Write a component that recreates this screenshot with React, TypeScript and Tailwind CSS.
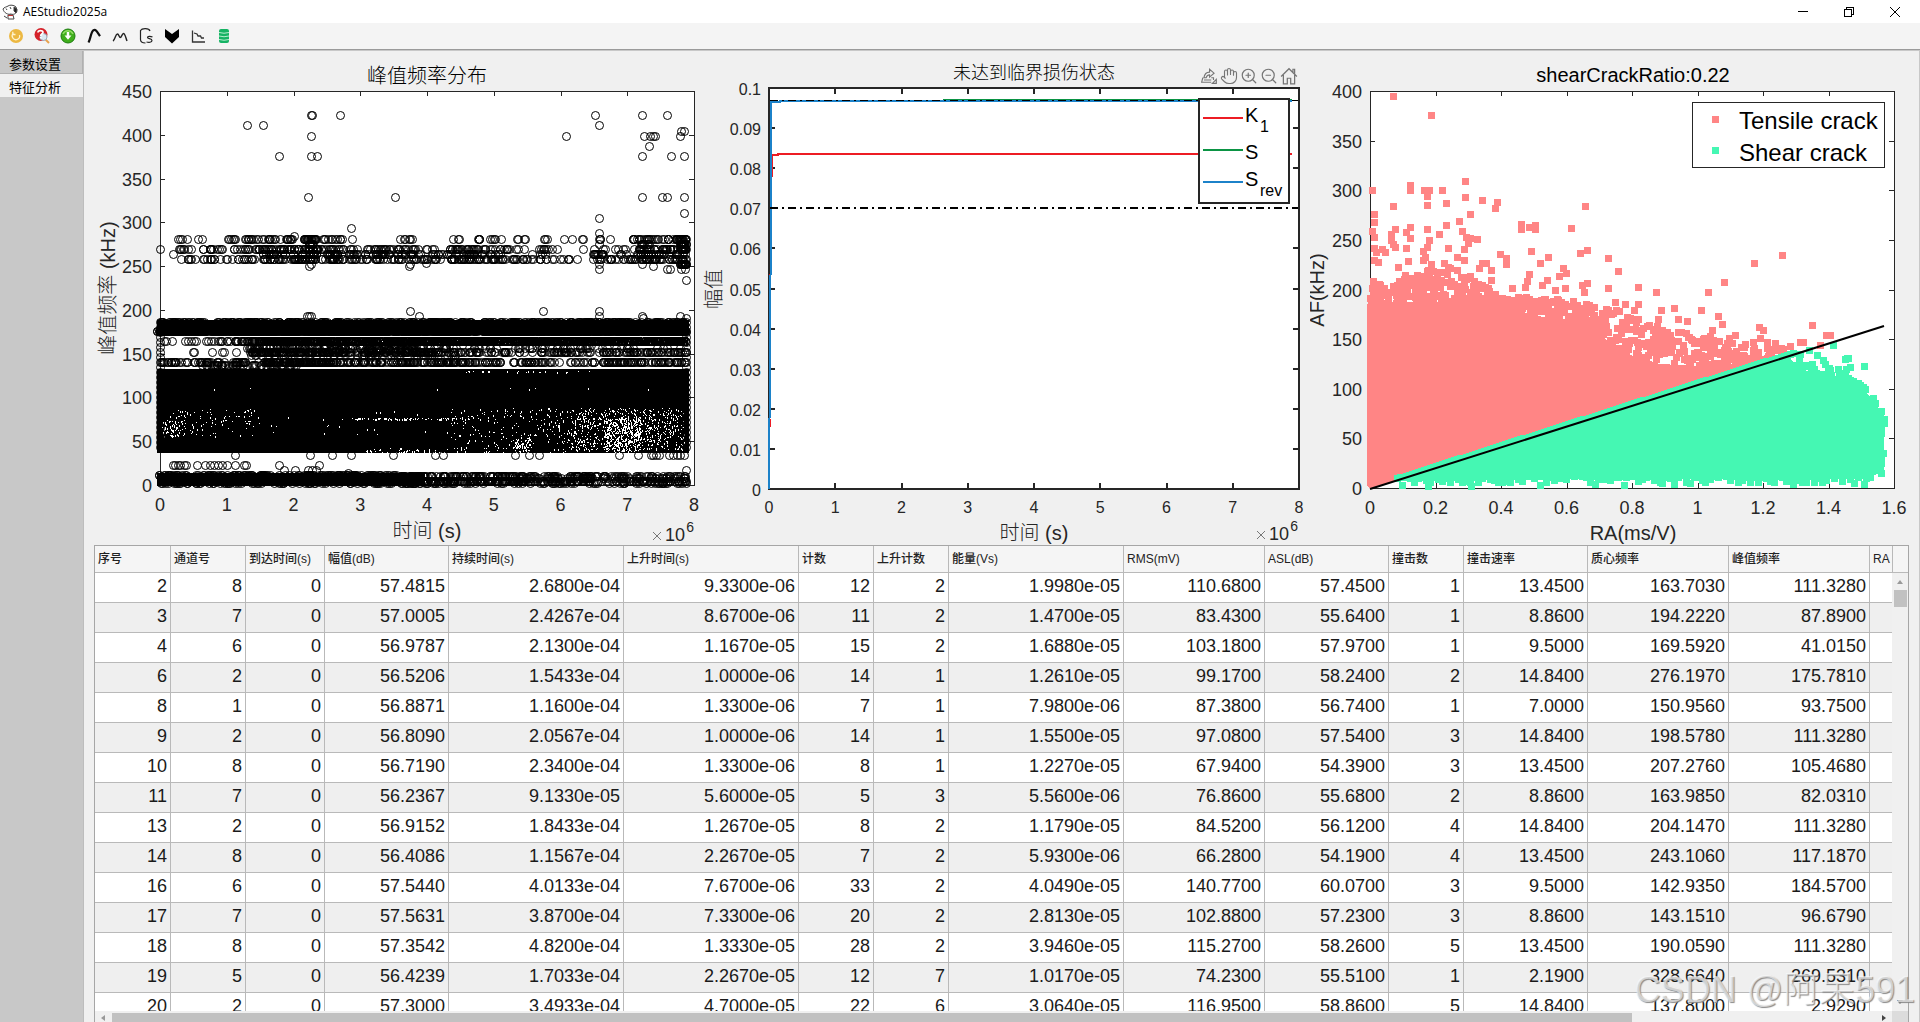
import React from 'react';
import { Hand, ZoomIn, ZoomOut } from 'lucide-react';

type Point = [number, number];

const INK = '#262626';

/* Small deterministic generator so the scatter plots are stable between renders. */
function makeRandom(seed: number) {
  let s = seed;
  return () => {
    s = (s * 1664525 + 1013904223) % 4294967296;
    return s / 4294967296;
  };
}

const ring = (x: number, y: number) => `M${Math.round(x) - 3.5} ${y + 0.5}a4 4 0 1 0 8 0a4 4 0 1 0-8 0`;
const square = (x: number, y: number) => `M${Math.round(x) - 3} ${Math.round(y) - 3}h7v7h-7z`;

function interpolate(points: Point[], x: number) {
  for (let i = 1; i < points.length; i++) {
    if (x <= points[i][0]) {
      const [x0, y0] = points[i - 1];
      const [x1, y1] = points[i];
      return y0 + ((y1 - y0) * (x - x0)) / (x1 - x0);
    }
  }
  return points[points.length - 1][1];
}

/* ---------- peak frequency data ---------- */

const loneFrequencies: Point[] = [
  [247, 125], [263, 125], [311, 115], [312, 115], [340, 115], [311, 136], [279, 156], [311, 156], [317, 156],
  [308, 197], [395, 197], [351, 228], [595, 115], [599, 125], [566, 136], [642, 115], [667, 115], [644, 136],
  [650, 136], [653, 136], [655, 136], [680, 136], [681, 131], [684, 131], [649, 146], [642, 156], [671, 156],
  [684, 156], [642, 197], [662, 197], [667, 197], [684, 197], [684, 213], [599, 218], [599, 233], [686, 280],
  [667, 269], [670, 269], [681, 269], [685, 269], [294, 236], [410, 311], [543, 311], [599, 311], [419, 316],
  [307, 316], [309, 316], [311, 316], [642, 316], [643, 318], [680, 316], [686, 318], [599, 316], [599, 269],
  [599, 264], [599, 244], [409, 266], [410, 264], [426, 263], [309, 266], [311, 264], [160, 249], [173, 254],
  [642, 264], [653, 266], [235, 455], [310, 455], [332, 455], [351, 455], [393, 455], [435, 455], [443, 455],
  [515, 455], [529, 455], [539, 455], [619, 455], [638, 455], [651, 455], [653, 455], [656, 455], [659, 455],
  [669, 455], [673, 455], [677, 455], [680, 455], [684, 455], [173, 465], [175, 465], [178, 465], [180, 465],
  [184, 465], [186, 465], [197, 465], [205, 465], [210, 465], [214, 465], [218, 465], [222, 465], [227, 465],
  [235, 465], [244, 465], [246, 465], [279, 465], [319, 465], [284, 470], [295, 470], [308, 470], [312, 470],
  [316, 470], [348, 473], [686, 470], [164, 341], [166, 341], [172, 341], [185, 341], [188, 341], [191, 341],
  [194, 341], [196, 341], [206, 341], [208, 341], [211, 341], [214, 341], [193, 352], [194, 352], [212, 352],
  [222, 352], [224, 352], [236, 352], [252, 347],
];

/* [row, from, to, count] */
const frequencyRuns: [number, number, number, number][] = [
  [239, 168, 210, 6], [239, 226, 240, 6], [239, 244, 260, 10], [239, 262, 300, 18], [239, 303, 318, 20],
  [239, 320, 352, 12], [239, 395, 412, 6], [239, 453, 459, 3], [239, 475, 506, 9], [239, 516, 530, 4],
  [239, 540, 572, 5], [239, 580, 615, 6], [239, 630, 650, 14], [239, 648, 675, 12], [239, 676, 688, 20],
  [249, 178, 205, 9], [249, 208, 255, 20], [249, 256, 318, 60], [249, 320, 420, 48], [249, 426, 510, 40],
  [249, 515, 560, 12], [249, 580, 625, 8], [249, 632, 688, 36],
  [254, 262, 318, 34], [254, 325, 420, 55], [254, 430, 500, 34], [254, 530, 560, 4], [254, 585, 635, 7], [254, 636, 688, 30],
  [259, 179, 215, 14], [259, 218, 255, 15], [259, 262, 318, 50], [259, 320, 430, 60], [259, 430, 520, 54],
  [259, 520, 582, 20], [259, 588, 632, 18], [259, 632, 688, 46],
  [244, 640, 650, 8], [244, 680, 688, 25], [264, 680, 688, 18], [249, 680, 688, 18], [244, 308, 314, 8], [254, 594, 603, 9],
  [322, 158, 687, 300],
  [341, 217, 255, 26], [341, 250, 687, 500], [331, 157, 687, 900],
  [352, 250, 330, 110], [352, 330, 460, 110], [352, 460, 590, 65], [352, 598, 687, 65],
  [348, 244, 330, 60], [348, 330, 460, 60], [348, 460, 687, 50], [355, 250, 460, 60], [350, 330, 420, 40],
  [362, 160, 220, 40], [362, 222, 265, 18], [362, 265, 330, 130], [362, 330, 480, 150], [362, 480, 595, 60],
  [362, 600, 687, 75], [365, 200, 300, 50],
  [476, 400, 520, 110], [481, 400, 520, 130], [476, 520, 690, 80], [481, 520, 690, 110], [478, 510, 690, 70],
  [483, 160, 690, 140], [475, 157, 400, 120],
];

function buildFrequencyPath() {
  const rnd = makeRandom(17);
  let d = loneFrequencies.map(([x, y]) => ring(x, y)).join('');
  for (const [y, from, to, count] of frequencyRuns) {
    for (let i = 0; i < count; i++) d += ring(from + rnd() * (Math.min(to, 686) - from), y);
  }
  for (let y = 322; y < 450; y += 5) d += ring(160, y) + ring(686, y);
  return d;
}

function buildSpecks() {
  const rnd = makeRandom(5);
  let d = '';
  const scatter = (x0: number, x1: number, y0: number, y1: number, count: number) => {
    for (let i = 0; i < count; i++) {
      const x = Math.round(x0 + rnd() * (x1 - x0));
      const y = Math.round(y0 + rnd() * (y1 - y0));
      d += `M${x} ${y}h1v${rnd() > 0.6 ? 2 : 1}h-1z`;
    }
  };
  scatter(162, 260, 408, 436, 100);
  scatter(162, 185, 420, 436, 60);
  scatter(260, 450, 410, 436, 20);
  scatter(350, 470, 418, 419, 90);
  scatter(450, 570, 408, 452, 230);
  scatter(570, 650, 408, 450, 480);
  scatter(605, 640, 418, 452, 300);
  scatter(650, 684, 408, 450, 180);
  scatter(515, 530, 438, 452, 60);
  scatter(365, 450, 448, 453, 50);
  scatter(460, 590, 371, 372, 26);
  scatter(262, 686, 337, 346, 130);
  scatter(185, 670, 388, 389, 8);
  return d;
}

/* ---------- crack classification data ---------- */

const tensileOutliers: Point[] = [
  [1393, 96], [1431, 115], [1465, 181], [1410, 185], [1410, 190], [1372, 190], [1424, 190], [1429, 190],
  [1442, 190], [1427, 196], [1465, 197], [1482, 200], [1497, 202], [1495, 208], [1446, 203], [1427, 205],
  [1393, 206], [1585, 206], [1374, 214], [1374, 222], [1470, 214], [1459, 221], [1446, 225], [1521, 224],
  [1521, 229], [1529, 227], [1535, 225], [1535, 229], [1571, 228], [1410, 227], [1406, 232], [1410, 238],
  [1395, 229], [1391, 234], [1391, 240], [1393, 244], [1395, 247], [1427, 229], [1439, 234], [1462, 231],
  [1466, 237], [1470, 238], [1477, 239], [1468, 243], [1464, 249], [1448, 248], [1372, 231], [1374, 237],
  [1374, 248], [1376, 252], [1382, 249], [1385, 252], [1406, 248], [1429, 240], [1427, 247], [1423, 251],
  [1425, 257], [1423, 260], [1408, 261], [1378, 262], [1374, 260], [1431, 264], [1444, 263], [1457, 257],
  [1464, 260], [1398, 267], [1500, 254], [1506, 258], [1506, 264], [1531, 251], [1548, 257], [1540, 263],
  [1580, 253], [1587, 250], [1608, 258], [1618, 271], [1563, 268], [1566, 273], [1559, 276], [1547, 280],
  [1529, 274], [1527, 281], [1525, 287], [1542, 285], [1491, 270], [1482, 263], [1486, 263], [1479, 268],
  [1491, 280], [1512, 288], [1555, 290], [1565, 288], [1582, 285], [1587, 283], [1584, 292], [1608, 288],
  [1638, 287], [1656, 292], [1708, 292], [1724, 282], [1754, 263], [1782, 255], [1638, 304], [1625, 304],
  [1615, 302], [1674, 308], [1661, 310], [1701, 310], [1718, 316], [1722, 324], [1687, 321], [1678, 319],
  [1658, 319], [1634, 310], [1636, 322], [1812, 325], [1826, 335], [1830, 335], [1820, 345], [1800, 342],
  [1803, 342], [1790, 346], [1759, 327], [1763, 330], [1753, 342], [1760, 338], [1767, 342], [1775, 343],
  [1712, 330], [1710, 336], [1695, 341], [1683, 345], [1670, 335], [1661, 342], [1729, 338], [1735, 335],
];

const shearOutliers: Point[] = [
  [1833, 345], [1809, 350], [1848, 358], [1845, 359], [1864, 366], [1847, 358], [1823, 360], [1812, 364],
  [1850, 367], [1846, 369], [1829, 368], [1850, 380], [1865, 389], [1799, 358], [1811, 365], [1800, 354],
  [1786, 362], [1790, 368], [1817, 355], [1825, 364], [1838, 369], [1845, 378], [1802, 368], [1881, 411],
  [1884, 419], [1873, 398], [1875, 403], [1402, 485], [1428, 486], [1471, 486], [1540, 485], [1595, 484],
  [1624, 485], [1674, 484], [1705, 482], [1864, 484], [1822, 482], [1660, 482], [1793, 484],
];

const tensileTop: Point[] = [
  [1370, 276], [1385, 286], [1405, 274], [1450, 266], [1470, 274], [1500, 294], [1560, 298], [1610, 308], [1650, 322],
  [1700, 337], [1760, 346], [1800, 350],
];
const tensileSolid: Point[] = [
  [1367, 304], [1400, 308], [1440, 302], [1480, 308], [1510, 318], [1560, 326], [1600, 334], [1620, 352],
  [1660, 364], [1700, 366], [1740, 368], [1786, 357],
];

function buildTensile() {
  const rnd = makeRandom(91);
  let d = tensileOutliers.map(([x, y]) => square(x, y)).join('');
  for (let i = 0; i < 720; i++) {
    const x = 1371 + Math.pow(rnd(), 1.1) * 415;
    const top = interpolate(tensileTop, x);
    const bottom = Math.max(interpolate(tensileSolid, x), top);
    const y = bottom - Math.pow(rnd(), 1.3) * (bottom - top);
    if (y < 489 - (x - 1370) * 0.317 - 4) d += square(x, y);
  }
  for (let y = 298; y < 484; y += 4) d += square(1370 + Math.floor(rnd() * 2), y);
  return d;
}

function buildShear() {
  const rnd = makeRandom(33);
  let d = shearOutliers.map(([x, y]) => square(x, y)).join('');
  for (let x = 1402; x < 1872; x += 4) d += square(x, 475 + rnd() * 8);
  for (let x = 1397; x < 1795; x += 3) d += square(x, 489 - (x - 1370) * 0.317 - 2);
  for (let i = 0; i < 60; i++) {
    const x = 1775 + rnd() * 90;
    d += square(x, interpolate([[1775, 368], [1830, 376], [1866, 392]], x) - rnd() * 8);
  }
  for (let y = 418; y < 475; y += 5) d += square(1879 + rnd() * 5, y);
  return d;
}

/* ---------- chart building blocks ---------- */

interface AxesProps {
  left: number;
  right: number;
  top: number;
  bottom: number;
  xLabels: string[];
  yLabels: string[];
  width: number;
  tick: number;
}

function Axes({ left, right, top, bottom, xLabels, yLabels, width, tick }: AxesProps) {
  const o = width === 1 ? 0.5 : 0;
  let d = `M${left + o} ${top + o}H${right + o}V${bottom + o}H${left + o}Z`;
  xLabels.forEach((_, i) => {
    const x = Math.round(left + ((right - left) * i) / (xLabels.length - 1)) + o;
    d += `M${x} ${top}v${tick}M${x} ${bottom}v${-tick}`;
  });
  yLabels.forEach((_, i) => {
    const y = Math.round(bottom - ((bottom - top) * i) / (yLabels.length - 1)) + o;
    d += `M${left} ${y}h${tick}M${right} ${y}h${-tick}`;
  });
  return <path d={d} fill="none" stroke={INK} strokeWidth={width} shapeRendering="crispEdges" />;
}

function AxisLabels({ left, right, top, bottom, xLabels, yLabels, size, drop }: Omit<AxesProps, 'width' | 'tick'> & { size: number; drop: number }) {
  return (
    <g fill={INK} fontSize={size}>
      {xLabels.map((t, i) => (
        <text key={t} x={left + ((right - left) * i) / (xLabels.length - 1)} y={bottom + drop} textAnchor="middle">
          {t}
        </text>
      ))}
      {yLabels.map((t, i) => (
        <text key={t} x={left - 8} y={bottom - ((bottom - top) * i) / (yLabels.length - 1) + 7} textAnchor="end">
          {t}
        </text>
      ))}
    </g>
  );
}

const SVG_CLASS = "block h-auto w-full font-['Liberation_Sans','Noto_Sans_CJK_SC',sans-serif] font-light";
const MILLIONS = ['0', '1', '2', '3', '4', '5', '6', '7', '8'];

function Exponent({ x, y }: { x: number; y: number }) {
  return (
    <g fill={INK} fontSize="18">
      <path d={`M${x - 41} ${y - 9}l8 8m0-8l-8 8`} stroke="#777" fill="none" />
      <text x={x - 9} y={y} textAnchor="end">10</text>
      <text x={x} y={y - 9} textAnchor="end" fontSize="14">6</text>
    </g>
  );
}

function FrequencyChart() {
  const box = {
    left: 160, right: 694, top: 91, bottom: 485, xLabels: MILLIONS,
    yLabels: ['0', '50', '100', '150', '200', '250', '300', '350', '400', '450'],
  };
  return (
    <svg viewBox="84 51 616 494" className={SVG_CLASS} role="img" aria-label="峰值频率分布">
      <rect x="160" y="91" width="534" height="394" fill="#fff" />
      <Axes {...box} width={1} tick={5} />
      <AxisLabels {...box} size={18} drop={26} />
      <g shapeRendering="crispEdges">
        <path d="M157 320H689V335H157ZM262 337H688V346H262ZM157 369H689V453H157ZM157 473H425V486H157Z" fill="#000" />
        <path d={buildSpecks()} fill="#fff" />
      </g>
      <path d={buildFrequencyPath()} fill="none" stroke="#000" />
      <text x="427" y="83" fontSize="20" textAnchor="middle">峰值频率分布</text>
      <text x="427" y="538" fontSize="20" textAnchor="middle" fill={INK}>时间 (s)</text>
      <text transform="translate(115 288) rotate(-90)" fontSize="20" textAnchor="middle" fill={INK}>峰值频率 (kHz)</text>
      <Exponent x={694} y={541} />
    </svg>
  );
}

function DamageChart() {
  const box = {
    left: 769, right: 1299, top: 88, bottom: 489, xLabels: MILLIONS,
    yLabels: ['0', '0.01', '0.02', '0.03', '0.04', '0.05', '0.06', '0.07', '0.08', '0.09', '0.1'],
  };
  return (
    <svg viewBox="700 51 610 494" className={SVG_CLASS} role="img" aria-label="未达到临界损伤状态">
      <rect x="769" y="88" width="530" height="401" fill="#fff" />
      <Axes {...box} width={2} tick={6} />
      <AxisLabels {...box} size={16} drop={24} />
      <g fill="none" strokeWidth="2" shapeRendering="crispEdges">
        <path d="M770 302v-28M772 177v-22h6v-1H1292M770 427v-8" stroke="#ed1c24" />
        <path d="M943 100H1292" stroke="#0b9444" />
        <path d="M769 489V418M770 418V275M771 275V102h9v-1H1292" stroke="#1c82c9" />
        <path d="M770 208H1298" stroke="#000" strokeDasharray="8 4 2 4" />
        <path d="M770 100.5H1298" stroke="#000" strokeWidth="1" strokeDasharray="8 4 2 4" />
      </g>
      <rect x="1199" y="99" width="90" height="104" fill="#fff" stroke={INK} strokeWidth="2" shapeRendering="crispEdges" />
      <g strokeWidth="2" shapeRendering="crispEdges">
        <path d="M1203 118h40" stroke="#ed1c24" />
        <path d="M1203 150h40" stroke="#0b9444" />
        <path d="M1203 182h40" stroke="#1c82c9" />
      </g>
      <g fontSize="20">
        <text x="1245" y="122">K</text>
        <text x="1260" y="132" fontSize="16">1</text>
        <text x="1245" y="159">S</text>
        <text x="1245" y="186">S</text>
        <text x="1260" y="196" fontSize="16">rev</text>
      </g>
      <text x="1034" y="79" fontSize="18" textAnchor="middle">未达到临界损伤状态</text>
      <text x="1034" y="540" fontSize="20" textAnchor="middle" fill={INK}>时间 (s)</text>
      <text transform="translate(721 289) rotate(-90)" fontSize="20" textAnchor="middle" fill={INK}>幅值</text>
      <Exponent x={1298} y={540} />
    </svg>
  );
}

function CrackChart() {
  const box = {
    left: 1370, right: 1894, top: 91, bottom: 488,
    xLabels: ['0', '0.2', '0.4', '0.6', '0.8', '1', '1.2', '1.4', '1.6'],
    yLabels: ['0', '50', '100', '150', '200', '250', '300', '350', '400'],
  };
  const solid = tensileSolid.map(([x, y]) => `${x} ${y}`).join('L');
  return (
    <svg viewBox="1310 51 609 494" className={SVG_CLASS} role="img" aria-label="shearCrackRatio:0.22">
      <rect x="1370" y="91" width="524" height="397" fill="#fff" />
      <Axes {...box} width={1} tick={5} />
      <AxisLabels {...box} size={18} drop={26} />
      <g shapeRendering="crispEdges">
        <path d={`M${solid}L1370 489L1367 485Z`} fill="#ff8585" />
        <path d={buildTensile()} fill="#ff8585" />
        <path d="M1396 479L1500 445L1787 354L1800 370L1850 378L1866 392L1877 405L1885 425L1884 450L1878 474L1860 479Z" fill="#45f7b3" />
        <path d={buildShear()} fill="#45f7b3" />
      </g>
      <path d="M1370 489L1884 326" stroke="#000" strokeWidth="2" />
      <rect x="1692.5" y="102.5" width="192" height="65" fill="#fff" stroke={INK} />
      <path d="M1712 116h7v7h-7z" fill="#ff8585" />
      <path d="M1712 147h7v7h-7z" fill="#45f7b3" />
      <g fontSize="24">
        <text x="1739" y="129">Tensile crack</text>
        <text x="1739" y="161">Shear crack</text>
      </g>
      <text x="1633" y="82" fontSize="20" textAnchor="middle">shearCrackRatio:0.22</text>
      <text x="1633" y="540" fontSize="20" textAnchor="middle" fill={INK}>RA(ms/V)</text>
      <text transform="translate(1324 290) rotate(-90)" fontSize="20" textAnchor="middle" fill={INK}>AF(kHz)</text>
    </svg>
  );
}

function PlotTools() {
  const icon = 'h-[18px] w-[18px]';
  const button = 'grid h-5 w-5 place-items-center';
  return (
    <div className="absolute right-[11px] top-[15px] flex text-[#757575]">
      <button className={button} aria-label="导出">
        <svg viewBox="0 0 16 16" className={icon} fill="none" stroke="currentColor" strokeWidth="1">
          <path d="M2.500 9.500L1.500 13.500H10M3.500 11.500H10M3.500 9.500C4 6 5.500 4.500 8.500 4.500V2l4 3.500-4 3.500V7C7 7 6 8 5.500 9.500zM10 9.500h2v2M11 14.500h3.500V11z" />
        </svg>
      </button>
      <button className={button} aria-label="平移"><Hand className={icon} strokeWidth={1.5} /></button>
      <button className={button} aria-label="放大"><ZoomIn className={icon} strokeWidth={1.6} /></button>
      <button className={button} aria-label="缩小"><ZoomOut className={icon} strokeWidth={1.6} /></button>
      <button className={button} aria-label="还原视图">
        <svg viewBox="0 0 16 16" className={icon} fill="none" stroke="currentColor" strokeWidth="1.1">
          <path d="M1 8.500L8 1.500l7 7M3 7v8h3.500v-5h3v5H13V7M11.500 4.500V2H13v4" />
        </svg>
      </button>
    </div>
  );
}

/* ---------- toolbar ---------- */

const toolIcons: { label: string; icon: React.ReactNode }[] = [
  {
    label: '刷新',
    icon: (
      <>
        <circle cx="8" cy="8" r="7" fill="#ecb842" />
        <path d="M5.500 5.200A3.700 3.700 0 1 0 11.500 7M4.800 3.800v2.700h2.700" fill="none" stroke="#fff4d0" strokeWidth="1.300" />
      </>
    ),
  },
  {
    label: '查询',
    icon: (
      <>
        <path d="M11 11l4 4" stroke="#e9a24c" strokeWidth="2" />
        <circle cx="7" cy="6.500" r="6.500" fill="#d5222a" />
        <circle cx="9.500" cy="9" r="3.500" fill="#dce8f2" stroke="#98a9b8" />
        <path d="M4 4.500C4 2 9 2 9 4.300 9 6 6.700 6 6.700 8M6.700 9v1.500" fill="none" stroke="#fff" strokeWidth="1.700" />
      </>
    ),
  },
  {
    label: '导入',
    icon: (
      <>
        <circle cx="8" cy="8" r="7" fill="#3fae1c" stroke="#1d7d10" />
        <path d="M3 6a5.500 5.500 0 0 1 10 0" fill="none" stroke="#8fdc61" strokeWidth="1.500" />
        <path d="M8 4v4" stroke="#fff" strokeWidth="2.500" />
        <path d="M4.500 7.500h7L8 11.800z" fill="#fff" />
      </>
    ),
  },
  {
    label: '单峰',
    icon: <path d="M2.500 14.500C4.500 11 5 3.500 7.500 2.200s3.500 1.500 6.500 6" fill="none" stroke="#111" strokeWidth="2.200" />,
  },
  {
    label: '多峰',
    icon: <path d="M1 13c2-1 2.500-7 4.300-7S7 9.500 8.300 9.500 10 5.500 11.500 5.500 13.500 9 15 13" fill="none" stroke="#222" strokeWidth="1.400" />,
  },
  {
    label: 'Gs',
    icon: (
      <path
        d="M12 3C11 0 4 0 2.500 2.500v9c0 3 3 3.500 5 3.500M14.500 9c-2-1-5-1-5 .5s4.500.8 4.500 3-3.500 2-5.500 1.500"
        fill="none"
        stroke="#222"
        strokeWidth="1.200"
      />
    ),
  },
  { label: '临界', icon: <path d="M1 1l7 5 7-5v8l-7 6.500L1 9z" fill="#000" /> },
  {
    label: '趋势',
    icon: <path d="M2.500 2.500v11.500H15M4 5l3 1 1 2h2.500l1 2H14" fill="none" stroke="#333" strokeWidth="1.300" />,
  },
  {
    label: '数据库',
    icon: (
      <>
        <rect x="3" y="1" width="10" height="14" rx="2" fill="#16b364" />
        <path d="M3 4.500q5 1.500 10 0M3 8q5 1.500 10 0M3 11.500q5 1.500 10 0" fill="none" stroke="#b8edcf" />
      </>
    ),
  },
];

function TitleBar() {
  const control = 'grid h-full w-[46px] place-items-center';
  return (
    <header className="flex h-[23px] shrink-0 items-center bg-white pl-[2px] pr-[2px]">
      <svg viewBox="0 0 16 16" className="h-4 w-4" fill="none" stroke="#444" strokeWidth="1">
        <path d="M1 5C2 3 5 3 6 2c2-1.500 6-1 8 1l1 4c-1 3-4 4-6 3C6 11 2 9 1 5z" fill="#fff" />
        <path d="M12 3l3 2-1 4-2-2z" fill="#222" />
        <path d="M6 11h5l1 4H6zM2 12l3 2M4 4.500l1 1.500M8 3l1 2" />
        <path d="M6 11.500h5" stroke="#b33" />
      </svg>
      <h1 className="ml-[5px] flex-1 font-['Open_Sans',sans-serif] text-xs leading-4 text-black">AEStudio2025a</h1>
      <button className={control} aria-label="最小化">
        <svg viewBox="0 0 12 12" className="h-3 w-3" shapeRendering="crispEdges"><path d="M1 5h10v1H1z" /></svg>
      </button>
      <button className={control} aria-label="还原">
        <svg viewBox="0 0 12 12" className="h-3 w-3" fill="none" stroke="#000" shapeRendering="crispEdges">
          <path d="M1.500 3.500h7v7h-7zM3.500 3.500v-2h7v7h-2" />
        </svg>
      </button>
      <button className={control} aria-label="关闭">
        <svg viewBox="0 0 12 12" className="h-3 w-3" stroke="#000"><path d="M1 1l10 10M11 1L1 11" /></svg>
      </button>
    </header>
  );
}

function Toolbar() {
  return (
    <div role="toolbar" className="flex h-[27px] shrink-0 items-center border-b border-[#9a9a9a] bg-[#f4f4f4] pl-[3px]">
      {toolIcons.map(({ label, icon }) => (
        <button key={label} aria-label={label} className="grid h-6 w-[26px] place-items-center">
          <svg viewBox="0 0 16 16" className="h-4 w-4">{icon}</svg>
        </button>
      ))}
    </div>
  );
}

/* ---------- table ---------- */

const columns: [string, string][] = [
  ['序号', 'w-[76px]'], ['通道号', 'w-[75px]'], ['到达时间(s)', 'w-[79px]'], ['幅值(dB)', 'w-[124px]'],
  ['持续时间(s)', 'w-[175px]'], ['上升时间(s)', 'w-[175px]'], ['计数', 'w-[75px]'], ['上升计数', 'w-[75px]'],
  ['能量(Vs)', 'w-[175px]'], ['RMS(mV)', 'w-[141px]'], ['ASL(dB)', 'w-[124px]'], ['撞击数', 'w-[75px]'],
  ['撞击速率', 'w-[124px]'], ['质心频率', 'w-[141px]'], ['峰值频率', 'w-[141px]'], ['RA', 'w-[75px]'],
];

const rows = `2 8 0 57.4815 2.6800e-04 9.3300e-06 12 2 1.9980e-05 110.6800 57.4500 1 13.4500 163.7030 111.3280
3 7 0 57.0005 2.4267e-04 8.6700e-06 11 2 1.4700e-05 83.4300 55.6400 1 8.8600 194.2220 87.8900
4 6 0 56.9787 2.1300e-04 1.1670e-05 15 2 1.6880e-05 103.1800 57.9700 1 9.5000 169.5920 41.0150
6 2 0 56.5206 1.5433e-04 1.0000e-06 14 1 1.2610e-05 99.1700 58.2400 2 14.8400 276.1970 175.7810
8 1 0 56.8871 1.1600e-04 1.3300e-06 7 1 7.9800e-06 87.3800 56.7400 1 7.0000 150.9560 93.7500
9 2 0 56.8090 2.0567e-04 1.0000e-06 14 1 1.5500e-05 97.0800 57.5400 3 14.8400 198.5780 111.3280
10 8 0 56.7190 2.3400e-04 1.3300e-06 8 1 1.2270e-05 67.9400 54.3900 3 13.4500 207.2760 105.4680
11 7 0 56.2367 9.1330e-05 5.6000e-05 5 3 5.5600e-06 76.8600 55.6800 2 8.8600 163.9850 82.0310
13 2 0 56.9152 1.8433e-04 1.2670e-05 8 2 1.1790e-05 84.5200 56.1200 4 14.8400 204.1470 111.3280
14 8 0 56.4086 1.1567e-04 2.2670e-05 7 2 5.9300e-06 66.2800 54.1900 4 13.4500 243.1060 117.1870
16 6 0 57.5440 4.0133e-04 7.6700e-06 33 2 4.0490e-05 140.7700 60.0700 3 9.5000 142.9350 184.5700
17 7 0 57.5631 3.8700e-04 7.3300e-06 20 2 2.8130e-05 102.8800 57.2300 3 8.8600 143.1510 96.6790
18 8 0 57.3542 4.8200e-04 1.3330e-05 28 2 3.9460e-05 115.2700 58.2600 5 13.4500 190.0590 111.3280
19 5 0 56.4239 1.7033e-04 2.2670e-05 12 7 1.0170e-05 74.2300 55.5100 1 2.1900 328.6640 269.5310
20 2 0 57.3000 3.4933e-04 4.7000e-05 22 6 3.0640e-05 116.9500 58.8600 5 14.8400 137.8000 2.9290`
  .split('\n')
  .map((line) => line.split(' '));

function DataTable() {
  return (
    <section className="mx-[10px] flex min-h-0 flex-1 flex-col border-x border-t border-[#a6a6a6] bg-[#f0f0f0]">
      <div className="flex min-h-0 flex-1">
        <div className="min-w-0 flex-1 overflow-hidden">
          <table className="w-[1850px] table-fixed border-separate border-spacing-0">
            <colgroup>
              {columns.map(([name, width]) => <col key={name} className={width} />)}
            </colgroup>
            <thead>
              <tr className="h-[27px] bg-[#f5f5f5]">
                {columns.map(([name]) => (
                  <th
                    key={name}
                    scope="col"
                    className="whitespace-nowrap border-b border-r border-[#b9b9b9] p-0 pl-[3px] text-left align-middle font-['Liberation_Sans','Noto_Sans_CJK_SC',sans-serif] text-xs font-medium leading-4 text-[#222]"
                  >
                    {name}
                  </th>
                ))}
              </tr>
            </thead>
            <tbody>
              {rows.map((row) => (
                <tr key={row[0]} className="h-[30px] bg-white even:bg-[#efefef]">
                  {row.map((value, i) => (
                    <td
                      key={i}
                      className="border-b border-r border-[#b9b9b9] p-0 pb-1 pr-[3px] text-right align-middle font-['Liberation_Sans',sans-serif] text-lg leading-5 text-[#1a1a1a]"
                    >
                      {value}
                    </td>
                  ))}
                  <td className="border-b border-[#b9b9b9] p-0" />
                </tr>
              ))}
            </tbody>
          </table>
        </div>
        <div className="flex w-4 shrink-0 flex-col">
          <div className="h-[27px] border-b border-l border-[#b9b9b9] bg-[#f5f5f5]" />
          <div className="flex flex-1 flex-col items-center justify-between pb-[7px] pt-[7px]">
            <div>
              <div className="mx-auto h-0 w-0 border-x-[3px] border-b-4 border-x-transparent border-b-[#999]" />
              <div className="mt-[6px] h-[17px] w-[13px] bg-[#c1c1c1]" />
            </div>
            <div className="h-0 w-0 border-x-[3px] border-t-4 border-x-transparent border-t-[#555]" />
          </div>
        </div>
      </div>
      <div className="flex h-[11px] shrink-0 items-end">
        <div className="flex h-[9px] flex-1 items-center pl-[6px] pr-[6px]">
          <div className="h-0 w-0 border-y-[3px] border-r-4 border-y-transparent border-r-[#999]" />
          <div className="ml-[7px] mr-[250px] h-full flex-1 bg-[#c1c1c1]" />
          <div className="h-0 w-0 border-y-[3px] border-l-4 border-y-transparent border-l-[#444]" />
        </div>
        <div className="h-full w-4 bg-[#dcdcdc]" />
      </div>
    </section>
  );
}

export default function App() {
  const tab = "block w-full border-b border-r pl-[9px] pt-[3px] text-left font-['Noto_Sans_CJK_SC',sans-serif] text-[13px] leading-[19px] text-black";
  return (
    <div className="relative flex h-screen flex-col overflow-hidden bg-[#f0f0f0]">
      <TitleBar />
      <Toolbar />
      <div className="flex min-h-0 flex-1 border-r border-t border-[#c8c8c8]">
        <nav className="w-[84px] shrink-0 border-r border-[#bdbdbd] bg-[#c8c8c8]">
          <button className={`${tab} border-[#b0b0b0]`}>参数设置</button>
          <button className={`${tab} border-[#f0f0f0] bg-[#f0f0f0]`}>特征分析</button>
        </nav>
        <main className="flex min-w-0 flex-1 flex-col">
          <div className="grid shrink-0 grid-cols-[616fr_610fr_609fr]">
            <FrequencyChart />
            <div className="relative">
              <DamageChart />
              <PlotTools />
            </div>
            <CrackChart />
          </div>
          <DataTable />
        </main>
      </div>
      <p className="pointer-events-none absolute bottom-[12px] right-[5px] font-['Liberation_Sans','Noto_Sans_CJK_SC',sans-serif] text-[36px] font-light leading-10 text-white/60 [text-shadow:1px_1px_1px_#8a8a8a]">
        CSDN @阿呆591
      </p>
    </div>
  );
}
